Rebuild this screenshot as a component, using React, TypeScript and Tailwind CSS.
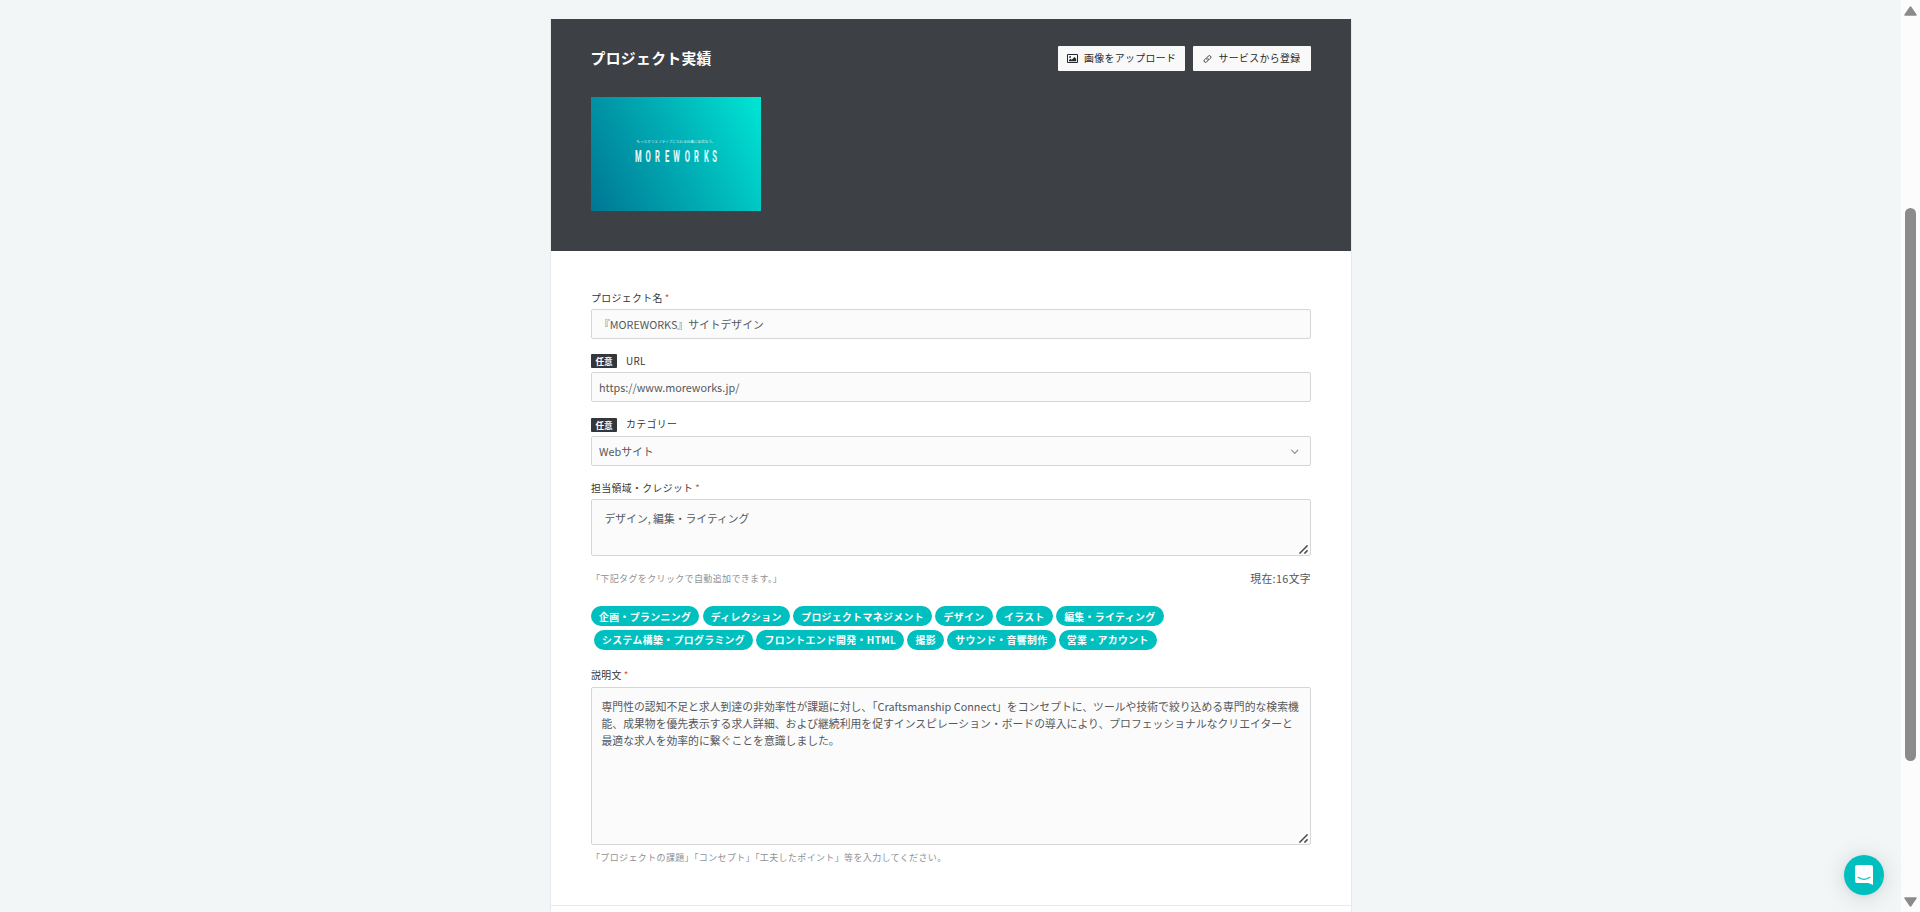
import type { ReactNode } from "react";

const TAG_ROWS = [
  ["企画・プランニング", "ディレクション", "プロジェクトマネジメント", "デザイン", "イラスト", "編集・ライティング"],
  ["システム構築・プログラミング", "フロントエンド開発・HTML", "撮影", "サウンド・音響制作", "営業・アカウント"],
];

const DESCRIPTION =
  "専門性の認知不足と求人到達の非効率性が課題に対し、「Craftsmanship Connect」をコンセプトに、ツールや技術で絞り込める専門的な検索機能、成果物を優先表示する求人詳細、および継続利用を促すインスピレーション・ボードの導入により、プロフェッショナルなクリエイターと最適な求人を効率的に繋ぐことを意識しました。";

export default function App() {
  return (
    <div
      lang="ja"
      className="flex h-[912px] w-[1920px] overflow-hidden bg-[#f2f6f7] font-['Noto_Sans_CJK_JP',sans-serif] text-[9.9px] tracking-[0.36px] text-[#55585c]"
    >
      <main className="flex flex-1 justify-center pt-[19px] pl-px">
        <div className="w-[802px] border-x border-[#e6eaec] bg-white">
          <ProjectHeader />
          <ProjectForm />
        </div>
      </main>
      <Scrollbar />
      <ChatButton />
    </div>
  );
}

function ProjectHeader() {
  return (
    <header className="h-[232px] bg-[#3d4044] px-10 pt-[27px]">
      <div className="flex h-[25px] items-center justify-between">
        <h1 className="-ml-[0.5px] text-[14.8px] font-bold leading-none text-white">プロジェクト実績</h1>
        <div className="flex gap-2">
          <HeaderButton className="w-[127px] gap-[6px] pl-[9px]" icon={<ImageIcon />}>
            画像をアップロード
          </HeaderButton>
          <HeaderButton className="w-[118px] gap-[6.5px] pl-[10px]" icon={<LinkIcon />}>
            サービスから登録
          </HeaderButton>
        </div>
      </div>
      <Thumbnail />
    </header>
  );
}

function HeaderButton({ className, icon, children }: { className: string; icon: ReactNode; children: ReactNode }) {
  return (
    <button
      className={`flex h-[25px] items-center rounded-[1px] bg-[#f9f9f9] leading-none whitespace-nowrap text-[#26292d] ${className}`}
    >
      {icon}
      <span>{children}</span>
    </button>
  );
}

function Thumbnail() {
  return (
    <div className="mt-[26px] h-[114px] w-[170px] bg-[linear-gradient(63deg,#007694_0%,#00b0b6_54%,#00e6d5_100%)]">
      <svg viewBox="0 0 170 114" width="170" height="114" className="tracking-normal">
        <text x="45.5" y="46" fontSize="3.7" fill="#fff" fillOpacity="0.85" textLength="79">
          もっとクリエイティブになれる仕事に出会おう。
        </text>
        <g transform="translate(44 65) scale(0.46 1)">
          <text
            fontFamily="Roboto, sans-serif"
            fontWeight="700"
            fontSize="16.5"
            fill="#e9fbfa"
            x="0 23 43.5 65 83 108 128.500 150 168"
            y="0"
          >
            MOREWORKS
          </text>
        </g>
      </svg>
    </div>
  );
}

function ProjectForm() {
  const field =
    "block w-full rounded-[2px] border border-[#d5d6d7] bg-[#fbfbfb] text-[10.8px] text-[#55585c] outline-none";

  return (
    <form className="h-[655px] border-b border-[#e8eaeb] px-10 pt-[37px]">
      <Label className="mb-[-1px]" required>
        プロジェクト名
      </Label>
      <input className={`${field} h-[30px] px-[7px] tracking-normal`} defaultValue="『MOREWORKS』サイトデザイン" />

      <Label className="mt-3 mb-[-1px]" badge={<Badge className="-mt-[2px]" />}>
        URL
      </Label>
      <input className={`${field} h-[30px] px-[7px] tracking-normal`} defaultValue="https://www.moreworks.jp/" />

      <Label className="mt-3" badge={<Badge />}>
        カテゴリー
      </Label>
      <div className="relative">
        <select className={`${field} h-[30px] appearance-none px-[7px] tracking-normal`}>
          <option>Webサイト</option>
        </select>
        <svg className="absolute top-[13px] right-3" width="8" height="6" viewBox="0 0 8 6" fill="none">
          <path d="M0.3 0.8 3.7 4.4 7.1 0.8" stroke="#8c8e90" strokeWidth="1.2" />
        </svg>
      </div>

      <Label className="mt-3 mb-[-1px]" required>
        担当領域・クレジット
      </Label>
      <div className="relative">
        <textarea
          className={`${field} h-[57px] resize-none px-[12.5px] pt-[10px] leading-[17px] tracking-normal`}
          defaultValue="デザイン, 編集・ライティング"
        />
        <ResizeGrip />
      </div>

      <div className="mt-[11px] flex h-[22px] items-center justify-between">
        <Hint>「下記タグをクリックで自動追加できます。」</Hint>
        <span className="text-[10.8px] leading-none">現在:16文字</span>
      </div>

      <div className="mt-[17px] flex flex-col gap-1">
        <div className="flex gap-[3.3px] leading-[12px]">
          {TAG_ROWS[0].map((tag) => (
            <Tag key={tag}>{tag}</Tag>
          ))}
        </div>
        <div className="flex gap-[3.2px] pl-[3px] leading-none">
          {TAG_ROWS[1].map((tag) => (
            <Tag key={tag}>{tag}</Tag>
          ))}
        </div>
      </div>

      <Label className="mt-[15px]" required>
        説明文
      </Label>
      <div className="relative">
        <textarea
          className={`${field} h-[158px] resize-none px-[9.5px] pt-[10px] leading-[17px] tracking-[0.03px]`}
          defaultValue={DESCRIPTION}
        />
        <ResizeGrip />
      </div>
      <div className="mt-px flex h-[22px] items-center">
        <Hint>「プロジェクトの課題」「コンセプト」「工夫したポイント」等を入力してください。</Hint>
      </div>
    </form>
  );
}

type LabelProps = { className?: string; required?: boolean; badge?: ReactNode; children: ReactNode };

function Label({ className = "", required, badge, children }: LabelProps) {
  return (
    <label className={`flex h-[22px] items-center leading-none text-[#33363a] ${className}`}>
      {badge}
      {children}
      {required && <span className="ml-[2px] text-[#e8503c]">*</span>}
    </label>
  );
}

function Badge({ className = "" }: { className?: string }) {
  return (
    <span
      className={`mr-[9px] flex h-[14px] w-[26px] items-center justify-center rounded-[1px] bg-[#33363a] text-[8.6px] font-bold tracking-normal text-white ${className}`}
    >
      任意
    </span>
  );
}

function Hint({ children }: { children: ReactNode }) {
  return <p className="text-[9px] leading-none text-[#8f9194]">{children}</p>;
}

function Tag({ children }: { children: ReactNode }) {
  return (
    <span className="flex h-5 items-center rounded-full bg-[#00bfbf] px-[8.1px] pt-px font-bold whitespace-nowrap text-white">
      {children}
    </span>
  );
}

function ResizeGrip() {
  return (
    <svg className="absolute right-[3px] bottom-[2px]" width="9" height="9" viewBox="0 0 9 9">
      <path d="M0.4 8.6 8.6 0.4M5.4 8.6 8.6 5.4" stroke="#4b4b4b" strokeWidth="1.5" fill="none" />
    </svg>
  );
}

function ImageIcon() {
  return (
    <svg width="11" height="9" viewBox="0 0 11 9">
      <path d="M0.5 0.5h10v8h-10z" fill="none" stroke="#26292d" />
      <circle cx="3.1" cy="3" r="0.9" fill="#26292d" />
      <path d="M2 7.3V6l1.6-1.3 1.2 1L7.4 2.9 9.2 4.8v2.5z" fill="#26292d" />
    </svg>
  );
}

function LinkIcon() {
  return (
    <svg width="9" height="10" viewBox="0 0 24 24" fill="none" stroke="#26292d" strokeWidth="2.3" strokeLinecap="round">
      <path d="M10 13.5a4 4 0 0 0 6 .4l4-4a4 4 0 0 0-5.7-5.7L12 6.5" />
      <path d="M14 10.5a4 4 0 0 0-6-.4l-4 4a4 4 0 0 0 5.7 5.7l2.3-2.3" />
    </svg>
  );
}

function Scrollbar() {
  return (
    <div className="flex w-[19px] flex-col items-center bg-[#fcfcfc] pt-[6px] pb-[5px]">
      <svg width="13" height="10" viewBox="0 0 13 10">
        <path d="M6.5 1 12 9H1z" fill="#8b8b8b" stroke="#8b8b8b" strokeWidth="1.5" strokeLinejoin="round" />
      </svg>
      <div className="mt-48 h-[553px] w-[11px] rounded-full bg-[#8b8b8b]" />
      <svg className="mt-auto" width="13" height="10" viewBox="0 0 13 10">
        <path d="M6.5 9 12 1H1z" fill="#8b8b8b" stroke="#8b8b8b" strokeWidth="1.5" strokeLinejoin="round" />
      </svg>
    </div>
  );
}

function ChatButton() {
  return (
    <button className="absolute top-[855px] left-[1844px] flex size-10 items-center justify-center rounded-full bg-[#00bfbf] shadow-[0_1px_5px_rgba(0,0,0,0.06),0_2px_24px_rgba(0,0,0,0.14)]">
      <svg width="18" height="20" viewBox="0 0 18 20">
        <path d="M2 0h14a2 2 0 0 1 2 2v18l-4.5-2H2a2 2 0 0 1-2-2V2a2 2 0 0 1 2-2z" fill="#fff" />
        <path d="M3.2 12.3c3.4 2.7 8.2 2.7 11.6 0" fill="none" stroke="#00bfbf" strokeWidth="1.2" strokeLinecap="round" />
      </svg>
    </button>
  );
}
